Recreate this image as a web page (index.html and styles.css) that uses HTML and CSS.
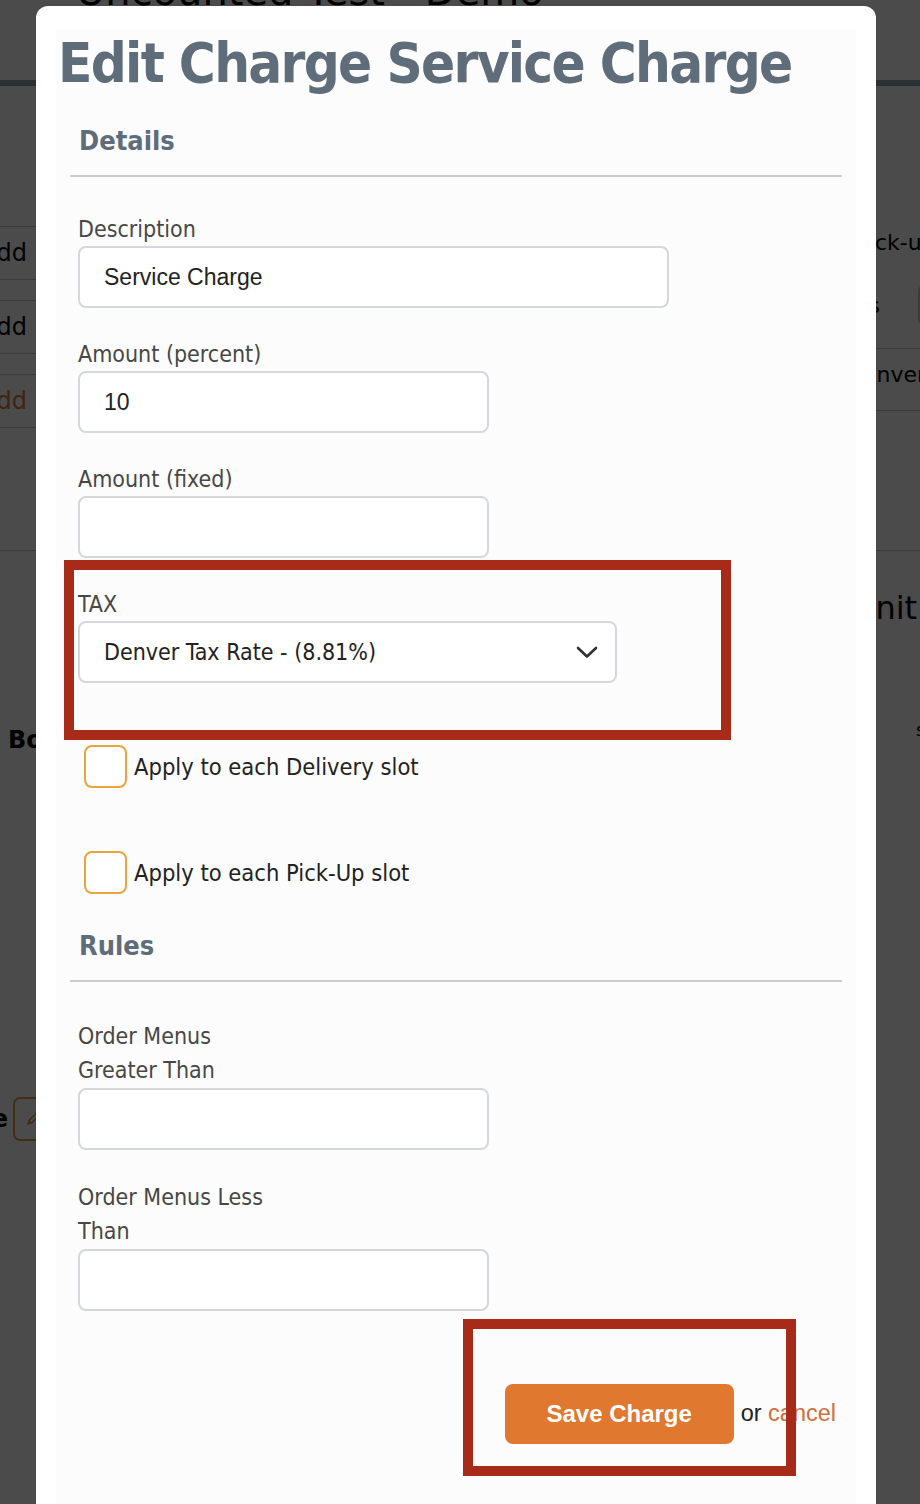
FILE: index.html
```html
<!DOCTYPE html>
<html lang="en">
<head>
    <meta charset="UTF-8">
    <meta name="viewport" content="width=device-width, initial-scale=1.0">
    <title>Edit Charge Service Charge</title>
    <link rel="stylesheet" href="styles.css">
</head>
<body>
    <!-- page behind the dialog -->
    <div class="page">
        <header class="page-header">
            <h1>Uncounted Test - Demo</h1>
        </header>
        <div class="page-body">
            <aside class="side-left">
                <div class="slot-row"><span>Add</span></div>
                <div class="slot-row"><span>Add</span></div>
                <div class="slot-row accent"><span>Add</span></div>
                <div class="side-divider"></div>
                <div class="side-bold">Box</div>
                <div class="side-edit">
                    <span>Name</span>
                    <span class="edit-box">
                        <svg width="16" height="16" viewBox="0 0 16 16"><path d="M3 13 L4 9.5 L11 2.5 L13.5 5 L6.5 12 Z M4 9.5 L6.5 12" fill="none" stroke="#e0a040" stroke-width="1.6" stroke-linejoin="round"/></svg>
                    </span>
                </div>
            </aside>
            <main class="page-main"></main>
            <aside class="side-right">
                <div class="side-text pickup">Pick-up slots</div>
                <div class="side-row">
                    <div class="cell-end">Totals</div>
                    <span class="side-box"></span>
                </div>
                <div class="side-line first"></div>
                <div class="side-text denver">Denver</div>
                <div class="side-line second"></div>
                <div class="side-line third"></div>
                <div class="side-text limit">Unit</div>
                <div class="side-text small">slots</div>
            </aside>
        </div>
    </div>

    <div class="backdrop"></div>

    <div class="modal">
        <div class="modal-inner">
            <h2 class="modal-title">Edit Charge Service Charge</h2>

            <div class="form-section">
                <h3 class="section-title">Details</h3>
                <div class="section-rule"></div>

                <div class="fields details">
                    <div class="field">
                        <label class="field-label">Description</label>
                        <input class="field-input wide" type="text" value="Service Charge">
                    </div>
                    <div class="field">
                        <label class="field-label">Amount (percent)</label>
                        <input class="field-input" type="text" value="10">
                    </div>
                    <div class="field">
                        <label class="field-label">Amount (fixed)</label>
                        <input class="field-input" type="text" value="">
                    </div>
                    <div class="field">
                        <label class="field-label">TAX</label>
                        <div class="select-wrap">
                            <select class="field-select">
                                <option>Denver Tax Rate - (8.81%)</option>
                            </select>
                            <svg class="chevron" width="22" height="13" viewBox="0 0 22 13"><path d="M2 2 L11 10.5 L20 2" fill="none" stroke="#2e3237" stroke-width="2.6" stroke-linecap="round" stroke-linejoin="round"/></svg>
                        </div>
                    </div>
                </div>

                <div class="checks">
                    <label class="check-row"><input type="checkbox"><span>Apply to each Delivery slot</span></label>
                    <label class="check-row"><input type="checkbox"><span>Apply to each Pick-Up slot</span></label>
                </div>

                <h3 class="section-title">Rules</h3>
                <div class="section-rule"></div>

                <div class="fields rules">
                    <div class="field">
                        <label class="field-label">Order Menus Greater Than</label>
                        <input class="field-input" type="text" value="">
                    </div>
                    <div class="field">
                        <label class="field-label">Order Menus Less Than</label>
                        <input class="field-input" type="text" value="">
                    </div>
                </div>

                <div class="actions">
                    <button class="save-btn">Save Charge</button>
                    <span class="or-text">or <a href="#" class="cancel-link">cancel</a></span>
                </div>
            </div>
        </div>
    </div>

    <!-- highlight boxes drawn over the screenshot -->
    <div class="mark mark-tax"></div>
    <div class="mark mark-save"></div>
</body>
</html>
```

FILE: styles.css
```css
* {
    box-sizing: border-box;
}

body {
    margin: 0;
    height: 1504px;
    overflow: hidden;
    background: #fff;
    font-family: 'DejaVu Sans', sans-serif;
    color: #000;
}

/* background page */
.page-header {
    display: flow-root;
    height: 86px;
    border-bottom: 6px solid #8ea7b4;
}

.page-header h1 {
    margin: -29px 0 0;
    padding-left: 76px;
    font-size: 40px;
    font-weight: normal;
    line-height: 1;
    white-space: nowrap;
}

.page-body {
    display: grid;
    grid-template-columns: 36px 1fr 60px;
}

.side-left {
    display: flex;
    flex-direction: column;
    padding-top: 140px;
}

.slot-row {
    height: 54px;
    margin-bottom: 20px;
    border-top: 1px solid #c8c8c8;
    border-bottom: 1px solid #c8c8c8;
    display: flex;
    justify-content: flex-end;
    align-items: center;
    padding-right: 9px;
    font-size: 24px;
    white-space: nowrap;
}

.slot-row.accent {
    color: #e07830;
}

.side-divider {
    margin-top: 102px;
    border-top: 1px solid #c8c8c8;
}

.side-bold {
    margin-top: 174px;
    padding-left: 8px;
    font-size: 24px;
    line-height: 30px;
    font-weight: bold;
    white-space: nowrap;
}

.side-edit {
    margin-top: 342px;
    width: 57px;
    display: flex;
    justify-content: flex-end;
    align-items: center;
    gap: 5px;
    font-size: 24px;
    font-weight: bold;
    white-space: nowrap;
}

.edit-box {
    flex: none;
    width: 44px;
    height: 44px;
    border: 2px solid #e0a040;
    border-radius: 7px;
    display: flex;
    align-items: center;
    padding-left: 10px;
}

.side-right {
    display: flex;
    flex-direction: column;
    font-size: 22px;
    white-space: nowrap;
}

.side-text {
    line-height: 30px;
}

.pickup {
    margin-top: 142px;
    margin-left: -4px;
}

.side-row {
    margin-top: 27px;
    height: 40px;
    display: flex;
    align-items: center;
}

.cell-end {
    width: 20px;
    display: flex;
    justify-content: flex-end;
}

.side-box {
    flex: none;
    margin-left: 38px;
    width: 40px;
    height: 40px;
    border: 2px solid #c8c8c8;
    border-radius: 6px;
}

.side-line {
    border-top: 1px solid #c8c8c8;
}

.side-line.first {
    margin-top: 23px;
}

.denver {
    margin-top: 11px;
    margin-left: -14px;
}

.side-line.second {
    margin-top: 20px;
}

.side-line.third {
    margin-top: 139px;
}

.limit {
    margin-top: 37px;
    margin-left: -8px;
    font-size: 32px;
    line-height: 40px;
}

.small {
    margin-top: 87px;
    padding-left: 56px;
    font-size: 18px;
}

.backdrop {
    position: fixed;
    inset: 0;
    background: rgba(0, 0, 0, 0.705);
}

/* dialog */
.modal {
    position: absolute;
    left: 36px;
    top: 6px;
    width: 840px;
    height: 1520px;
    padding: 20px;
    background: #fff;
    border-radius: 12px;
}

.modal-inner {
    height: 100%;
    background: #fcfcfc;
}

.modal-title {
    margin: 3px 0 0;
    padding-left: 2px;
    font-family: 'DejaVu Sans Condensed', 'DejaVu Sans', sans-serif;
    font-size: 56px;
    line-height: 1.2;
    letter-spacing: -1.7px;
    font-weight: bold;
    color: #5f6d7a;
    white-space: nowrap;
}

.form-section {
    padding: 0 14px;
}

.section-title {
    margin: 29px 0 0;
    padding-left: 9px;
    font-family: 'DejaVu Sans Condensed', 'DejaVu Sans', sans-serif;
    font-size: 27px;
    line-height: 1.2;
    font-weight: bold;
    color: #5f6d7a;
}

.section-rule {
    margin-top: 17px;
    border-top: 2px solid #cbcbcb;
}

.fields {
    padding-left: 8px;
    margin-top: 35.3px;
}

.field {
    margin-bottom: 28.5px;
}

.field-label {
    display: block;
    max-width: 205px;
    font-family: 'DejaVu Sans Condensed', 'DejaVu Sans', sans-serif;
    font-size: 23px;
    line-height: 1.5;
    color: #474747;
}

.field-input {
    display: block;
    width: 411px;
    height: 62px;
    margin: 0;
    padding: 0 24px;
    border: 2px solid #d4d7db;
    border-radius: 8px;
    background: #fff;
    font-family: 'Liberation Sans', sans-serif;
    font-size: 23px;
    color: #222;
    outline: none;
}

.field-input.wide {
    width: 591px;
}

.select-wrap {
    position: relative;
    width: 539px;
}

.field-select {
    display: block;
    width: 100%;
    height: 62px;
    margin: 0;
    padding: 0 24px;
    border: 2px solid #d4d7db;
    border-radius: 8px;
    background: #fff;
    -webkit-appearance: none;
    appearance: none;
    font-family: 'DejaVu Sans Condensed', 'DejaVu Sans', sans-serif;
    font-size: 23px;
    color: #222;
    outline: none;
}

.chevron {
    position: absolute;
    right: 19px;
    top: 25px;
    pointer-events: none;
}

.checks {
    padding-left: 14px;
    margin-top: 62px;
    display: flex;
    flex-direction: column;
    gap: 63px;
}

.check-row {
    display: flex;
    align-items: center;
    font-family: 'DejaVu Sans Condensed', 'DejaVu Sans', sans-serif;
    font-size: 23.5px;
    color: #222;
}

.check-row input {
    -webkit-appearance: none;
    appearance: none;
    width: 43px;
    height: 43px;
    margin: 0 7px 0 0;
    border: 2px solid #e9a43f;
    border-radius: 8px;
    background: #fff;
}

.checks + .section-title {
    margin-top: 36px;
}

.rules {
    margin-top: 37px;
}

.rules .field {
    margin-bottom: 30px;
}

.actions {
    margin-top: 73px;
    padding-right: 6px;
    display: flex;
    justify-content: flex-end;
    align-items: center;
}

.save-btn {
    width: 229px;
    height: 60px;
    border: none;
    border-radius: 8px;
    background: #e07830;
    color: #fff;
    font-family: 'Liberation Sans', sans-serif;
    font-size: 24px;
    font-weight: bold;
    cursor: pointer;
}

.or-text {
    margin-left: 7px;
    font-family: 'Liberation Sans', sans-serif;
    font-size: 23.5px;
    color: #222;
}

.cancel-link {
    color: #d06e3d;
    text-decoration: none;
}

/* red highlight frames */
.mark {
    position: absolute;
    border: 10px solid #a82b1a;
}

.mark-tax {
    left: 64px;
    top: 560px;
    width: 667px;
    height: 180px;
}

.mark-save {
    left: 463px;
    top: 1319px;
    width: 333px;
    height: 157px;
}
```
